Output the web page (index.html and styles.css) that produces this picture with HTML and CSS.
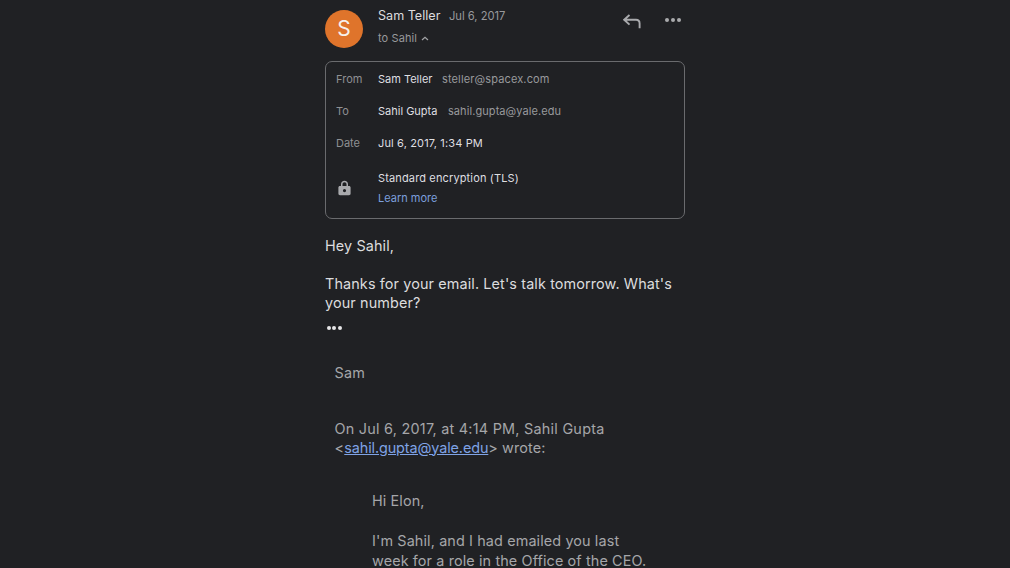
FILE: index.html
```html
<!DOCTYPE html>
<html lang="en">
<head>
<meta charset="utf-8">
<title>Email</title>
<link rel="stylesheet" href="styles.css">
</head>
<body>
<main class="mail">
  <header class="head">
    <div class="avatar">S</div>
    <div class="who">
      <div class="line1"><span class="name">Sam Teller</span><span class="when">Jul 6, 2017</span></div>
      <div class="line2">to Sahil
        <svg class="caret" width="8" height="5" viewBox="0 0 8 5"><path d="M1 4L4 1.2L7 4" fill="none" stroke="#a2a3a6" stroke-width="1.2"/></svg>
      </div>
    </div>
    <svg class="reply" width="18" height="15" viewBox="0 0 18 15"><path d="M6.5 1L1.2 5.8L6.5 10.6M1.5 5.8H13C15.2 5.8 16.6 7.3 16.6 9.4V14.2" fill="none" stroke="#a9aaad" stroke-width="1.9"/></svg>
    <div class="more"><i></i><i></i><i></i></div>
  </header>

  <section class="details">
    <div class="row r-from"><span class="lab">From</span><span class="val">Sam Teller</span><span class="addr">steller@spacex.com</span></div>
    <div class="row r-to"><span class="lab">To</span><span class="val">Sahil Gupta</span><span class="addr addr-to">sahil.gupta@yale.edu</span></div>
    <div class="row r-date"><span class="lab">Date</span><span class="val wide">Jul 6, 2017, 1:34 PM</span></div>
    <div class="row r-sec">
      <span class="lab lock">
        <svg width="13" height="16" viewBox="0 0 13 16"><path fill-rule="evenodd" fill="#a9aaad" d="M3 6V4.2C3 2.2 4.5 .8 6.5 .8S10 2.2 10 4.2V6H11C12 6 12.6 6.6 12.6 7.5V13.6C12.6 14.6 12 15.2 11 15.2H2C1 15.2 .4 14.6 .4 13.6V7.5C.4 6.6 1 6 2 6ZM4.5 6H8.5V4.2C8.5 3 7.7 2.2 6.5 2.2S4.5 3 4.5 4.2ZM6.5 9A1.6 1.6 0 1 0 6.5 12.2A1.6 1.6 0 1 0 6.5 9Z"/></svg>
      </span>
      <div class="sec">
        <div class="val wide">Standard encryption (TLS)</div>
        <div class="learn">Learn more</div>
      </div>
    </div>
  </section>

  <div class="body">
    <p class="hey">Hey Sahil,</p>
    <p class="thanks">Thanks for your email. Let's talk tomorrow. What's your number?</p>
    <div class="dots"><i></i><i></i><i></i></div>
    <div class="quoted">
      <p class="sam">Sam</p>
      <p class="on">On Jul 6, 2017, at 4:14 PM, Sahil Gupta &lt;<a class="link">sahil.gupta@yale.edu</a><span class="tail">&gt; wrote:</span></p>
      <div class="inner">
        <p class="hi">Hi Elon,</p>
        <p class="im">I'm Sahil, and I had emailed you last week for a role in the Office of the CEO.</p>
      </div>
    </div>
  </div>
</main>
</body>
</html>
```
FILE: styles.css
```css
html, body { margin: 0; height: 100%; overflow: hidden; background: #202124; }
body { font-family: "Inter", "Liberation Sans", sans-serif; color: #e3e3e5; }
p { margin: 0; }
.mail { width: 360px; margin-left: 325px; padding-top: 10px; }

.head { display: flex; align-items: flex-start; height: 38px; }
.avatar { width: 38px; height: 38px; border-radius: 50%; background: #df742b; color: #f6f1ec; font-size: 21px; line-height: 38px; text-align: center; flex: none; }
.who { margin-left: 15px; flex: 1; }
.line1 { display: flex; align-items: baseline; line-height: 14px; margin-top: -1px; }
.name { font-size: 12.6px; color: #dcdcde; }
.when { font-size: 11.2px; color: #98999c; margin-left: 8.5px; }
.line2 { font-size: 11px; letter-spacing: .1px; color: #98999c; margin-top: 8px; line-height: 14px; display: flex; align-items: center; gap: 4px; }
.caret { margin-top: 1px; }
.reply { flex: none; margin: 4px 0 0; }
.more { display: flex; gap: 2px; margin: 8px 4px 0 24px; flex: none; }
.more i { width: 4px; height: 4px; border-radius: 50%; background: #a9aaad; }

.details { box-sizing: border-box; height: 158px; margin-top: 13px; border: 1px solid #6a6b6e; border-radius: 7px; padding: 0 10px; }
.row { display: flex; align-items: center; font-size: 11px; line-height: 14px; }
.r-from { margin-top: 10px; }
.r-to { margin-top: 18px; }
.r-date { margin-top: 18px; }
.r-sec { margin-top: 21px; }
.lab { width: 42px; color: #8f9093; flex: none; }
.lab svg { display: block; }
.lock svg { margin-left: 2px; }
.val { color: #dfdfe1; }
.wide { letter-spacing: .14px; }
.addr { color: #98999c; margin-left: 9.5px; letter-spacing: .13px; }
.addr-to { margin-left: 10.5px; letter-spacing: .08px; }
.sec .val { line-height: 14px; }
.learn { color: #7c9fdc; margin-top: 5.5px; line-height: 14px; }

.body { font-size: 14.4px; letter-spacing: .12px; line-height: 19px; margin-top: 16.5px; color: #dcdcde; }
.thanks { margin-top: 19px; }
.dots { display: flex; gap: 1.5px; margin: 14px 0 0 1.5px; height: 4px; }
.dots i { width: 4px; height: 4px; border-radius: 50%; background: #e6e6e8; }
.quoted { padding-left: 9.5px; color: #a5a6a9; letter-spacing: .25px; }
.sam { margin-top: 33px; }
.on { margin-top: 37px; }
.link { color: #7fa3e6; text-decoration: underline; letter-spacing: -.1px; }
.tail { letter-spacing: .1px; }
.inner { padding-left: 37.5px; width: 280px; letter-spacing: .12px; }
.hi { margin-top: 34px; }
.im { margin-top: 21px; line-height: 20px; }
```
